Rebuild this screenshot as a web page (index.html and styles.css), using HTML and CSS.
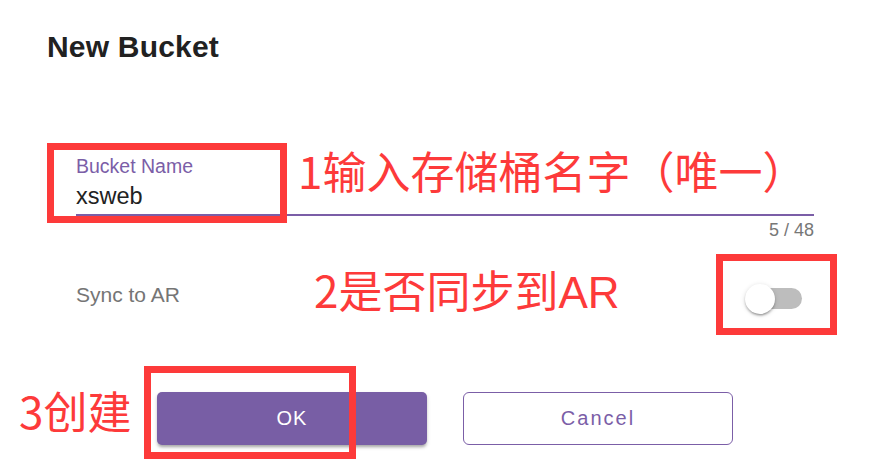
FILE: index.html
```html
<!DOCTYPE html>
<html lang="en">
<head>
<meta charset="utf-8">
<title>New Bucket</title>
<link rel="stylesheet" href="styles.css">
</head>
<body>
<div class="dialog">
  <h1 class="title">New Bucket</h1>

  <div class="field">
    <div class="field-label">Bucket Name</div>
    <div class="field-input">xsweb</div>
    <div class="field-counter">5 / 48</div>
  </div>

  <div class="switch-row">
    <span class="switch-label">Sync to AR</span>
    <span class="switch">
      <span class="switch-track"></span>
      <span class="switch-thumb"></span>
    </span>
  </div>

  <div class="actions">
    <button class="btn btn-primary">OK</button>
    <button class="btn btn-outline">Cancel</button>
  </div>

  <div class="mark mark-1"></div>
  <div class="mark mark-2"></div>
  <div class="mark mark-3"></div>
  <div class="note note-1">1输入存储桶名字（唯一）</div>
  <div class="note note-2">2是否同步到<span class="note-latin">AR</span></div>
  <div class="note note-3">3创建</div>
</div>
</body>
</html>
```

FILE: styles.css
```css
* { box-sizing: border-box; }

html, body {
  margin: 0;
  padding: 0;
  background: #ffffff;
}

body {
  font-family: "Liberation Sans", Arial, sans-serif;
  width: 884px;
  height: 476px;
  overflow: hidden;
}

.dialog {
  position: relative;
  width: 884px;
  height: 476px;
  padding: 29px 70px 0 47px;
}

.title {
  margin: 0;
  font-size: 30px;
  line-height: 36px;
  font-weight: 700;
  color: #212121;
  letter-spacing: 0.2px;
}

.field {
  margin-top: 90px;
  margin-left: 29px;
  display: flex;
  flex-direction: column;
}

.field-label {
  font-size: 19.5px;
  line-height: 22px;
  color: #7b5ea7;
}

.field-input {
  margin-top: 5px;
  font-size: 23.5px;
  line-height: 28px;
  color: #222222;
  padding-bottom: 4px;
  border-bottom: 2px solid #7b5ea7;
}

.field-counter {
  margin-top: 4px;
  align-self: flex-end;
  font-size: 18px;
  line-height: 20px;
  color: #777777;
}

.switch-row {
  margin-top: 43px;
  margin-left: 29px;
  padding-right: 12px;
  display: flex;
  justify-content: space-between;
  align-items: flex-start;
}

.switch-label {
  font-size: 21px;
  line-height: 24px;
  color: #757575;
}

.switch {
  position: relative;
  display: block;
  width: 57px;
  height: 30px;
  margin-top: 1px;
}

.switch-track {
  position: absolute;
  left: 4px;
  top: 4px;
  width: 53px;
  height: 21px;
  border-radius: 11px;
  background: #bdbdbd;
}

.switch-thumb {
  position: absolute;
  left: 0;
  top: 0;
  width: 30px;
  height: 30px;
  border-radius: 50%;
  background: #ffffff;
  box-shadow: 0 2px 2px rgba(0,0,0,0.2), 0 1px 5px rgba(0,0,0,0.15), 0 3px 1px -2px rgba(0,0,0,0.12);
}

.actions {
  margin-top: 78px;
  margin-left: 110px;
  display: flex;
  gap: 36px;
}

.btn {
  width: 270px;
  height: 53px;
  font-family: "Liberation Sans", Arial, sans-serif;
  font-size: 20px;
  cursor: pointer;
  padding: 0;
}

.btn-primary {
  background: #785ea5;
  color: #ffffff;
  border: none;
  border-radius: 5px;
  letter-spacing: 1px;
  box-shadow: 0 3px 3px -1px rgba(0,0,0,0.25), 0 2px 4px rgba(0,0,0,0.15);
}

.btn-outline {
  background: #ffffff;
  color: #7b5ea7;
  border: 1px solid #7b5ea7;
  border-radius: 6px;
  font-size: 20px;
  letter-spacing: 2px;
}

.mark {
  position: absolute;
  border: 7px solid #fd3a3a;
}

.mark-1 { left: 47px; top: 143px; width: 240px; height: 80px; }
.mark-2 { left: 716px; top: 254px; width: 121px; height: 81px; }
.mark-3 { left: 144px; top: 366px; width: 212px; height: 93px; }

.note {
  position: absolute;
  font-family: "Noto Sans CJK SC", "Liberation Sans", sans-serif;
  font-size: 44px;
  line-height: 44px;
  color: #fd3a3a;
  white-space: nowrap;
}

.note-latin {
  font-family: "Liberation Sans", "Noto Sans CJK SC", sans-serif;
}

.note-1 { left: 298px; top: 148px; }
.note-2 { left: 314px; top: 267px; }
.note-3 { left: 19px; top: 388px; }
```
